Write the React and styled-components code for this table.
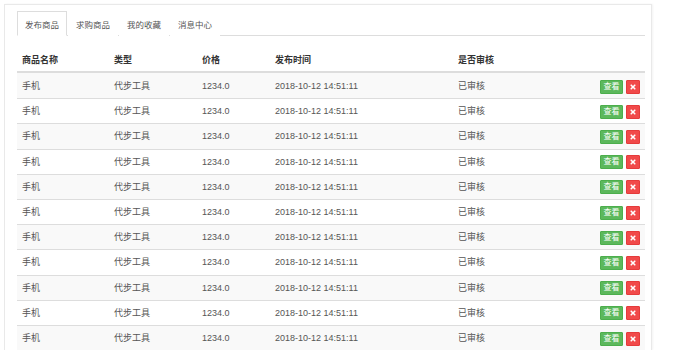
import React, { useState } from "react";
import styled, { createGlobalStyle } from "styled-components";

const GlobalStyle = createGlobalStyle`
  html, body {
    margin: 0;
    padding: 0;
    background: #fff;
  }
  body {
    font-family: "Liberation Sans", "Noto Sans CJK SC", sans-serif;
    font-size: 9px;
    color: #555;
  }
`;

const tabs = ["发布商品", "求购商品", "我的收藏", "消息中心"];

const rows = Array.from({ length: 11 }, (_, i) => ({
  id: i,
  name: "手机",
  type: "代步工具",
  price: "1234.0",
  time: "2018-10-12 14:51:11",
  status: "已审核",
}));

function App() {
  const [active, setActive] = useState(0);

  return (
    <>
      <GlobalStyle />
      <Panel>
        <TabBar>
          {tabs.map((t, i) => (
            <Tab key={t} $active={i === active} onClick={() => setActive(i)}>
              {t}
            </Tab>
          ))}
        </TabBar>
        <Table>
          <colgroup>
            <col style={{ width: 92 }} />
            <col style={{ width: 88 }} />
            <col style={{ width: 73 }} />
            <col style={{ width: 183 }} />
            <col style={{ width: 110 }} />
            <col />
          </colgroup>
          <thead>
            <tr>
              <Th>商品名称</Th>
              <Th>类型</Th>
              <Th>价格</Th>
              <Th>发布时间</Th>
              <Th>是否审核</Th>
              <Th />
            </tr>
          </thead>
          <tbody>
            {rows.map((r, i) => (
              <Row key={r.id} $striped={i % 2 === 0}>
                <Td $first={i === 0}>{r.name}</Td>
                <Td $first={i === 0}>{r.type}</Td>
                <Td $first={i === 0}>{r.price}</Td>
                <Td $first={i === 0}>{r.time}</Td>
                <Td $first={i === 0}>{r.status}</Td>
                <Td $first={i === 0} $right>
                  <Actions>
                    <ViewButton>查看</ViewButton>
                    <DeleteButton aria-label="删除">
                      <svg width="6" height="6" viewBox="0 0 10 10">
                        <path
                          d="M2 2 L8 8 M8 2 L2 8"
                          stroke="#fff"
                          strokeWidth="2.6"
                          strokeLinecap="round"
                        />
                      </svg>
                    </DeleteButton>
                  </Actions>
                </Td>
              </Row>
            ))}
          </tbody>
        </Table>
      </Panel>
    </>
  );
}

export default App;

const Panel = styled.div`
  margin: 4px 0 0 4px;
  width: 648px;
  box-sizing: border-box;
  padding: 6px 6px 0 12px;
  border: 1px solid #e9e9e9;
  border-bottom: none;
  box-shadow: 1px 0 2px rgba(0, 0, 0, 0.05);
  background: #fff;
`;

const TabBar = styled.ul`
  display: flex;
  list-style: none;
  margin: 0;
  padding: 0;
  border-bottom: 1px solid #ddd;
  height: 24px;
`;

const Tab = styled.li`
  box-sizing: border-box;
  height: 25px;
  padding: 0 7px;
  margin-right: 1px;
  display: flex;
  align-items: center;
  font-size: 8.5px;
  color: #555;
  cursor: pointer;
  border: 1px solid ${(p) => (p.$active ? "#ddd" : "transparent")};
  border-bottom-color: ${(p) => (p.$active ? "#fff" : "transparent")};
  background: #fff;
`;

const Table = styled.table`
  width: 100%;
  margin-top: 12px;
  table-layout: fixed;
  border-collapse: separate;
  border-spacing: 0;
`;

const Th = styled.th`
  height: 23px;
  padding: 0 5px;
  text-align: left;
  font-weight: bold;
  color: #333;
  border-bottom: 2px solid #ddd;
`;

const Row = styled.tr`
  background: ${(p) => (p.$striped ? "#f9f9f9" : "#fff")};
`;

const Td = styled.td`
  padding: 0 5px;
  line-height: 24.2px;
  border-top: 1px solid ${(p) => (p.$first ? "transparent" : "#ddd")};
  text-align: ${(p) => (p.$right ? "right" : "left")};
  white-space: nowrap;
`;

const Actions = styled.div`
  display: inline-flex;
  gap: 3px;
  vertical-align: middle;
`;

const ViewButton = styled.button`
  box-sizing: border-box;
  width: 23px;
  height: 14px;
  padding: 0;
  border: 1px solid #4cae4c;
  border-radius: 1px;
  background: #5cb85c;
  color: #fff;
  font-family: inherit;
  font-size: 8px;
  line-height: 12px;
  cursor: pointer;
`;

const DeleteButton = styled.button`
  box-sizing: border-box;
  width: 14px;
  height: 14px;
  padding: 0;
  border: 1px solid #e53b3b;
  border-radius: 1px;
  background: #f14a4a;
  display: flex;
  align-items: center;
  justify-content: center;
  cursor: pointer;
`;
